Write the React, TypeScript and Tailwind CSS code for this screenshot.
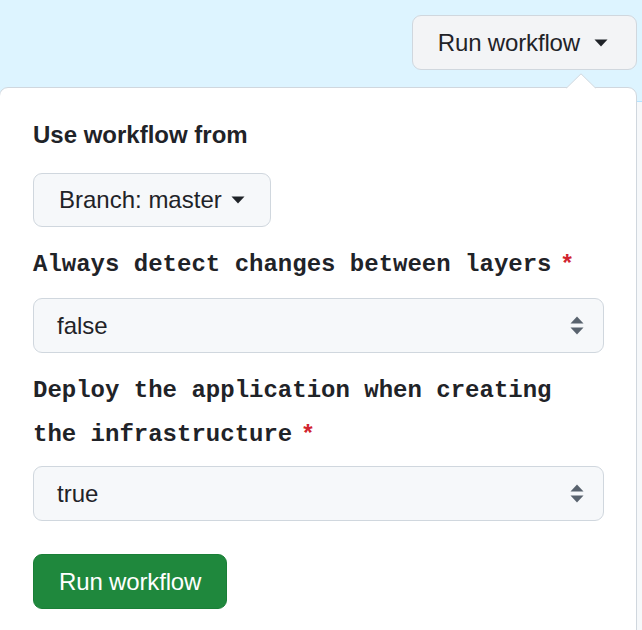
import React from "react";

function Caret({ className }: { className?: string }) {
  return (
    <svg width="14" height="8" viewBox="0 0 14 8" className={className}>
      <path d="M0.5 0.5 L13.5 0.5 L7 7.5 Z" fill="currentColor" />
    </svg>
  );
}

function SelectArrows() {
  return (
    <svg width="14" height="20" viewBox="0 0 14 20" className="text-[#59636e]">
      <path d="M7 0.5 L13.5 7.5 L0.5 7.5 Z" fill="currentColor" />
      <path d="M0.5 11.5 L13.5 11.5 L7 18.5 Z" fill="currentColor" />
    </svg>
  );
}

function Select({ value }: { value: string }) {
  return (
    <div className="flex h-[55px] w-[571px] items-center justify-between rounded-[9px] border border-[#d0d7de] bg-[#f6f8fa] pl-[23px] pr-[19px] text-[24px] text-[#1f2328]">
      <span>{value}</span>
      <SelectArrows />
    </div>
  );
}

function Label({ children }: { children: React.ReactNode }) {
  return (
    <div
      className="text-[24px] font-bold leading-[42px] text-[#1f2328]"
      style={{ fontFamily: '"Liberation Mono", monospace' }}
    >
      {children}
      <span
        className="ml-[11px] text-[#d1242f]"
        style={{ fontFamily: '"Liberation Sans", Arial, sans-serif' }}
      >
        *
      </span>
    </div>
  );
}

export default function App() {
  return (
    <div
      className="relative h-[630px] w-[642px] overflow-hidden bg-[#f6f8fa]"
      style={{ fontFamily: '"Liberation Sans", Arial, sans-serif' }}
    >
      <div className="flex h-[102px] items-start justify-end border-b border-[#b6e3ff] bg-[#ddf4ff] pr-[5px] pt-[15px]">
        <button className="flex h-[55px] items-center gap-[14px] rounded-[9px] border border-[#d0d7de] bg-[#f3f4f6] pl-[25px] pr-[28px] text-[24px] tracking-[-0.15px] text-[#1f2328]">
          Run workflow
          <Caret className="text-[#1f2328]" />
        </button>
      </div>

      <div className="absolute left-[-1px] top-[87px] h-[600px] w-[638px] rounded-[9px] border border-[#d0d7de] bg-white pl-[33px] pt-[29px]">
        <svg
          width="30"
          height="16"
          viewBox="0 0 30 16"
          className="absolute left-[566px] top-[-15px]"
        >
          <path d="M0 15.5 L15 0.8 L30 15.5" fill="white" stroke="#d0d7de" strokeWidth="1" />
          <rect x="0.5" y="15" width="29" height="2" fill="white" />
        </svg>

        <div className="text-[24px] font-bold leading-[36px] text-[#1f2328]">
          Use workflow from
        </div>

        <button className="mt-[20px] flex h-[54px] items-center gap-[9px] rounded-[9px] border border-[#d0d7de] bg-[#f6f8fa] pl-[25px] pr-[25px] text-[24px] text-[#1f2328]">
          Branch: master
          <Caret className="text-[#1f2328]" />
        </button>

        <div className="mt-[15px]">
          <Label>Always detect changes between layers</Label>
          <div className="mt-[12px]">
            <Select value="false" />
          </div>
        </div>

        <div className="mt-[17px] w-[540px]">
          <Label>Deploy the application when creating the infrastructure</Label>
        </div>
        <div className="mt-[10px]">
          <Select value="true" />
        </div>

        <button className="mt-[33px] flex h-[55px] items-center rounded-[9px] border border-[#1a7f37] bg-[#1f883d] px-[25px] text-[24px] tracking-[-0.15px] text-white">
          Run workflow
        </button>
      </div>
    </div>
  );
}
